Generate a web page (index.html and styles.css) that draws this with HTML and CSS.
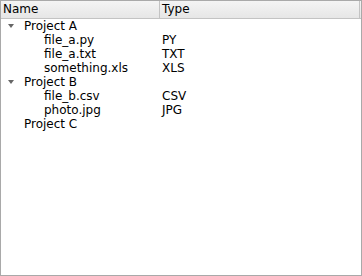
FILE: index.html
```html
<!DOCTYPE html>
<html lang="en">
<head>
  <meta charset="UTF-8">
  <title>Tree</title>
  <link rel="stylesheet" href="styles.css">
</head>
<body>
  <div class="tree">
    <div class="header">
      <div class="col name">Name</div>
      <div class="col type">Type</div>
    </div>
    <div class="rows">
      <div class="row"><div class="cell name"><span class="arrow"></span>Project A</div><div class="cell type"></div></div>
      <div class="row"><div class="cell name child">file_a.py</div><div class="cell type">PY</div></div>
      <div class="row"><div class="cell name child">file_a.txt</div><div class="cell type">TXT</div></div>
      <div class="row"><div class="cell name child">something.xls</div><div class="cell type">XLS</div></div>
      <div class="row"><div class="cell name"><span class="arrow"></span>Project B</div><div class="cell type"></div></div>
      <div class="row"><div class="cell name child">file_b.csv</div><div class="cell type">CSV</div></div>
      <div class="row"><div class="cell name child">photo.jpg</div><div class="cell type">JPG</div></div>
      <div class="row"><div class="cell name leaf">Project C</div><div class="cell type"></div></div>
    </div>
  </div>
</body>
</html>
```
FILE: styles.css
```css
html, body {
  margin: 0;
  padding: 0;
  height: 100%;
}

body {
  font-family: "DejaVu Sans", sans-serif;
  font-size: 12px;
  color: #000000;
  background-color: #ffffff;
}

.tree {
  box-sizing: border-box;
  height: 276px;
  border: 1px solid #a9a9a9;
  background-color: #ffffff;
}

.header {
  display: flex;
  height: 17px;
  background: linear-gradient(#f4f4f4, #e6e6e6);
  border-bottom: 1px solid #c3c3c3;
}

.header .col {
  box-sizing: border-box;
  padding-left: 2px;
  line-height: 17px;
}

.header .name {
  width: 159px;
  border-right: 1px solid #c3c3c3;
}

.header .type {
  flex: 1;
  border-right: 1px solid #c3c3c3;
  margin-right: 1px;
}

.rows {
  padding-top: 0;
}

.row {
  display: flex;
  height: 14px;
  line-height: 14px;
}

.cell.name {
  width: 160px;
  padding-left: 23px;
  box-sizing: border-box;
  position: relative;
}

.cell.child {
  padding-left: 43px;
}

.cell.type {
  flex: 1;
  padding-left: 1px;
}

.arrow {
  position: absolute;
  left: 7px;
  top: 5px;
  width: 0;
  height: 0;
  border-left: 3px solid transparent;
  border-right: 3px solid transparent;
  border-top: 4px solid #666666;
}
```
